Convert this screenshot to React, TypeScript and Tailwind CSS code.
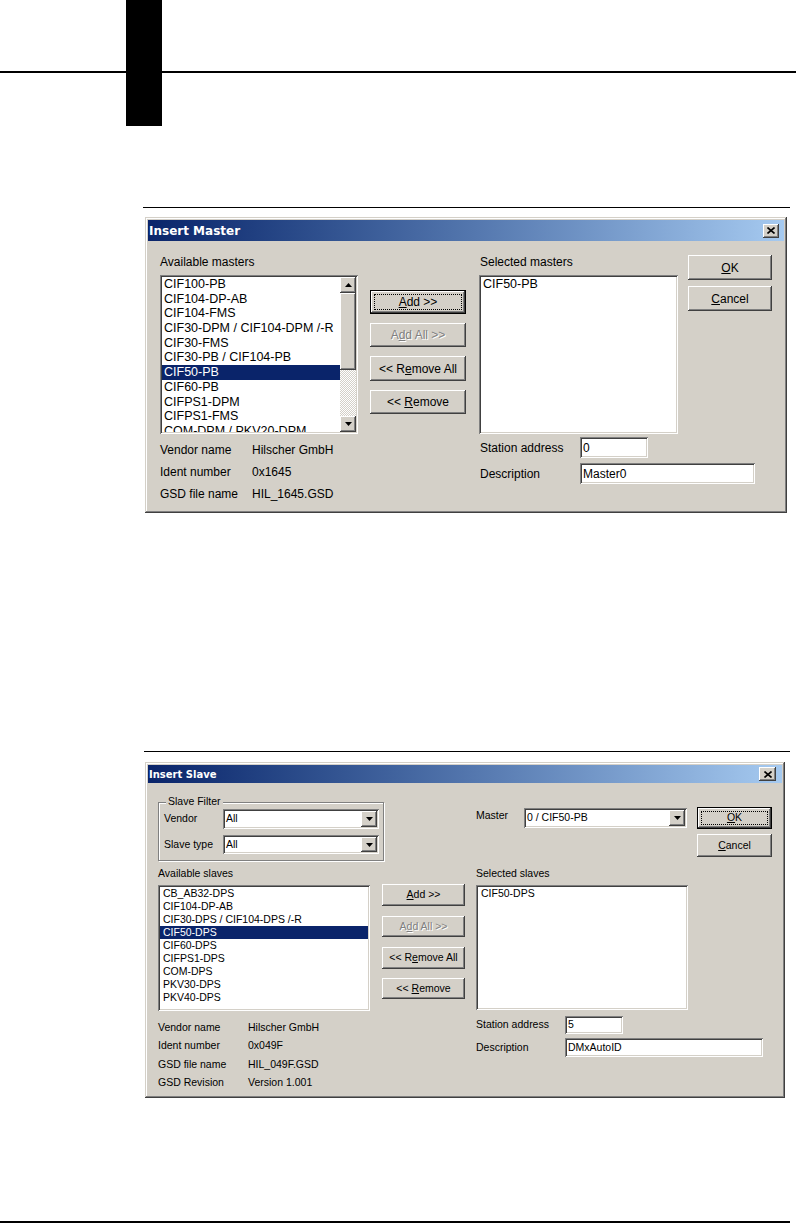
import React from 'react';

const sunken =
  'shadow-[inset_1px_1px_0_#808080,inset_-1px_-1px_0_#ffffff,inset_2px_2px_0_#404040,inset_-2px_-2px_0_#d4d0c8]';
const raised =
  'shadow-[inset_-1px_-1px_0_#404040,inset_1px_1px_0_#ffffff,inset_-2px_-2px_0_#808080,inset_2px_2px_0_#d4d0c8]';
const frame =
  'shadow-[inset_-1px_-1px_0_#404040,inset_1px_1px_0_#d4d0c8,inset_-2px_-2px_0_#808080,inset_2px_2px_0_#ffffff]';

type BtnProps = {
  children: React.ReactNode;
  className: string;
  isDefault?: boolean;
  focus?: boolean;
  disabled?: boolean;
};

const Button = ({ children, className, isDefault, focus, disabled }: BtnProps) => (
  <div className={`${className} bg-[#d4d0c8] ${isDefault ? 'border border-black' : ''}`}>
    <div
      className={`relative flex h-full w-full items-center justify-center ${raised} ${
        disabled ? 'text-[#808080] [text-shadow:1px_1px_0_#ffffff]' : 'text-black'
      }`}
    >
      {focus && <div className="absolute inset-[3px] border border-dotted border-black" />}
      <span className="whitespace-nowrap">{children}</span>
    </div>
  </div>
);

const ArrowBtn = ({ up, className }: { up?: boolean; className: string }) => (
  <div className={`${className} flex shrink-0 items-center justify-center bg-[#d4d0c8] ${raised}`}>
    <svg width="7" height="4" viewBox="0 0 7 4">
      <path d={up ? 'M3.5 0L7 4H0Z' : 'M0 0H7L3.5 4Z'} fill="#000" />
    </svg>
  </div>
);

const CloseBtn = ({ className }: { className: string }) => (
  <div className={`${className} flex items-center justify-center bg-[#d4d0c8] ${raised}`}>
    <svg width="8" height="7" viewBox="0 0 8 7">
      <path d="M0.5 0.5L7.5 6.5M7.5 0.5L0.5 6.5" stroke="#000" strokeWidth="1.6" />
    </svg>
  </div>
);

const Combo = ({ value, className }: { value: string; className: string }) => (
  <div className={`${className} flex items-stretch bg-white p-[2px] ${sunken}`}>
    <div className="flex flex-1 items-center pl-[1px] whitespace-nowrap">{value}</div>
    <ArrowBtn className="w-[16px]" />
  </div>
);

const masters = [
  'CIF100-PB',
  'CIF104-DP-AB',
  'CIF104-FMS',
  'CIF30-DPM / CIF104-DPM /-R',
  'CIF30-FMS',
  'CIF30-PB / CIF104-PB',
  'CIF50-PB',
  'CIF60-PB',
  'CIFPS1-DPM',
  'CIFPS1-FMS',
  'COM-DPM / PKV20-DPM',
];

const slaves = [
  'CB_AB32-DPS',
  'CIF104-DP-AB',
  'CIF30-DPS / CIF104-DPS /-R',
  'CIF50-DPS',
  'CIF60-DPS',
  'CIFPS1-DPS',
  'COM-DPS',
  'PKV30-DPS',
  'PKV40-DPS',
];

const InsertMaster = () => (
  <div className={`ml-[145px] mt-[9px] h-[296px] w-[642px] bg-[#d4d0c8] p-[3px] text-[12px] text-black ${frame}`}>
    <div className="flex h-[21px] items-center justify-between bg-linear-to-r from-[#0a246a] to-[#a6caf0] pl-[1px] pr-[5px]">
      <span className="font-['DejaVu_Sans',sans-serif] text-[12px] font-bold text-white">Insert Master</span>
      <CloseBtn className="h-[14px] w-[16px]" />
    </div>

    <div className="flex items-start pt-[13px]">
      {/* available */}
      <div className="ml-[12px] w-[198px] shrink-0">
        <div className="h-[21px] leading-[16px]">Available masters</div>
        <div className={`flex h-[159px] bg-white p-[2px] ${sunken}`}>
          <div className="min-w-0 flex-1 overflow-hidden text-[12.5px]">
            {masters.map((m) => (
              <div
                key={m}
                className={`h-[14.7px] whitespace-nowrap pl-[2px] leading-[15px] ${
                  m === 'CIF50-PB' ? 'bg-[#0a246a] text-white' : ''
                }`}
              >
                {m}
              </div>
            ))}
          </div>
          <div className="flex w-[16px] flex-col">
            <ArrowBtn up className="h-[16px] w-[16px]" />
            <div className={`h-[77px] bg-[#d4d0c8] ${raised}`} />
            <div className="flex-1 bg-[image:repeating-conic-gradient(#d4d0c8_0_25%,#ffffff_0_50%)] bg-[length:2px_2px]" />
            <ArrowBtn className="h-[16px] w-[16px]" />
          </div>
        </div>
        <div className="mt-[5px] leading-[22px]">
          <div className="flex">
            <span className="w-[92px]">Vendor name</span>
            <span>Hilscher GmbH</span>
          </div>
          <div className="flex">
            <span className="w-[92px]">Ident number</span>
            <span>0x1645</span>
          </div>
          <div className="flex">
            <span className="w-[92px]">GSD file name</span>
            <span>HIL_1645.GSD</span>
          </div>
        </div>
      </div>

      {/* buttons */}
      <div className="ml-[12px] mt-[36px] w-[96px] shrink-0">
        <Button className="h-[24px]" isDefault focus>
          <u>A</u>dd &gt;&gt;
        </Button>
        <Button className="mt-[9px] h-[24px]" disabled>
          A<u>d</u>d All &gt;&gt;
        </Button>
        <Button className="mt-[9px] h-[25px]">
          &lt;&lt; R<u>e</u>move All
        </Button>
        <Button className="mt-[9px] h-[24px]">
          &lt;&lt; <u>R</u>emove
        </Button>
      </div>

      {/* selected */}
      <div className="ml-[13px] w-[199px] shrink-0">
        <div className="h-[21px] pl-[1px] leading-[16px]">Selected masters</div>
        <div className={`h-[159px] bg-white p-[2px] text-[12.5px] ${sunken}`}>
          <div className="h-[14.7px] pl-[2px] leading-[15px]">CIF50-PB</div>
        </div>
        <div className="mt-[3px] flex h-[21px] w-max items-center">
          <span className="w-[101px] pl-[1px]">Station address</span>
          <div className={`flex h-[21px] w-[68px] items-center bg-white pl-[3px] ${sunken}`}>0</div>
        </div>
        <div className="mt-[5px] flex h-[21px] w-max items-center">
          <span className="w-[101px] pl-[1px]">Description</span>
          <div className={`flex h-[21px] w-[175px] items-center bg-white pl-[3px] ${sunken}`}>Master0</div>
        </div>
      </div>

      {/* ok / cancel */}
      <div className="ml-[10px] mt-[1px] w-[84px] shrink-0">
        <Button className="h-[25px]">
          <u>O</u>K
        </Button>
        <Button className="mt-[6px] h-[25px]">
          <u>C</u>ancel
        </Button>
      </div>
    </div>
  </div>
);

const InsertSlave = () => (
  <div className={`ml-[145px] mt-[10px] h-[336px] w-[640px] bg-[#d4d0c8] p-[3px] text-[10.5px] text-black ${frame}`}>
    <div className="flex h-[18px] items-center justify-between bg-linear-to-r from-[#0a246a] to-[#a6caf0] pl-[1px] pr-[6px]">
      <span className="font-['DejaVu_Sans',sans-serif] text-[10px] font-bold text-white">Insert Slave</span>
      <CloseBtn className="h-[14px] w-[17px]" />
    </div>

    {/* filter row */}
    <div className="flex items-start">
      <div className="relative ml-[10px] mt-[19px] w-[226px] shrink-0 border border-[#808080] pb-[6px] pl-[5px] pt-[6px] shadow-[inset_1px_1px_0_#ffffff,1px_1px_0_#ffffff]">
        <span className="absolute -top-[8px] left-[7px] bg-[#d4d0c8] px-[2px] leading-[13px]">Slave Filter</span>
        <div className="flex h-[20px] items-center">
          <span className="w-[59px]">Vendor</span>
          <Combo className="h-[20px] w-[156px]" value="All" />
        </div>
        <div className="mt-[6px] flex h-[19px] items-center">
          <span className="w-[59px]">Slave type</span>
          <Combo className="h-[19px] w-[156px]" value="All" />
        </div>
      </div>

      <div className="ml-[92px] mt-[25px] flex shrink-0 items-center">
        <span className="-mt-[4px] w-[48px]">Master</span>
        <Combo className="h-[20px] w-[163px]" value="0 / CIF50-PB" />
      </div>

      <div className="ml-[10px] mt-[24px] w-[75px] shrink-0">
        <Button className="h-[22px]" isDefault focus>
          <u>O</u>K
        </Button>
        <Button className="mt-[5px] h-[23px]">
          <u>C</u>ancel
        </Button>
      </div>
    </div>

    {/* lists row */}
    <div className="flex items-start">
      <div className="ml-[10px] w-[212px] shrink-0">
        <div className="h-[24px] pt-[6px] leading-[13px]">Available slaves</div>
        <div className={`h-[126px] bg-white p-[2px] ${sunken}`}>
          {slaves.map((s) => (
            <div
              key={s}
              className={`h-[13px] whitespace-nowrap pl-[3px] leading-[13px] ${
                s === 'CIF50-DPS' ? 'bg-[#0a246a] text-white' : ''
              }`}
            >
              {s}
            </div>
          ))}
        </div>
        <div className="mt-[7px] leading-[18.33px]">
          <div className="flex">
            <span className="w-[90px]">Vendor name</span>
            <span>Hilscher GmbH</span>
          </div>
          <div className="flex">
            <span className="w-[90px]">Ident number</span>
            <span>0x049F</span>
          </div>
          <div className="flex">
            <span className="w-[90px]">GSD file name</span>
            <span>HIL_049F.GSD</span>
          </div>
          <div className="flex">
            <span className="w-[90px]">GSD Revision</span>
            <span>Version 1.001</span>
          </div>
        </div>
      </div>

      <div className="ml-[12px] mt-[23px] w-[83px] shrink-0">
        <Button className="h-[22px]">
          <u>A</u>dd &gt;&gt;
        </Button>
        <Button className="mt-[10px] h-[21px]" disabled>
          A<u>d</u>d All &gt;&gt;
        </Button>
        <Button className="mt-[10px] h-[22px]">
          &lt;&lt; R<u>e</u>move All
        </Button>
        <Button className="mt-[9px] h-[21px]">
          &lt;&lt; <u>R</u>emove
        </Button>
      </div>

      <div className="ml-[11px] w-[212px] shrink-0">
        <div className="h-[24px] pt-[6px] leading-[13px]">Selected slaves</div>
        <div className={`h-[125px] bg-white p-[2px] ${sunken}`}>
          <div className="h-[13px] pl-[3px] leading-[13px]">CIF50-DPS</div>
        </div>
        <div className="mt-[6px] flex h-[18px] w-max items-center">
          <span className="w-[89px]">Station address</span>
          <div className={`flex h-[18px] w-[58px] items-center bg-white pl-[3px] ${sunken}`}>5</div>
        </div>
        <div className="mt-[4px] flex h-[19px] w-max items-center">
          <span className="w-[89px]">Description</span>
          <div className={`flex h-[19px] w-[198px] items-center bg-white pl-[3px] ${sunken}`}>DMxAutoID</div>
        </div>
      </div>
    </div>
  </div>
);

export default function App() {
  return (
    <div className="relative h-[1225px] w-[796px] overflow-hidden bg-white font-['Liberation_Sans',Arial,sans-serif]">
      {/* page header with chapter tab */}
      <div className="relative h-[126px] pt-[71px]">
        <div className="h-[2px] bg-black" />
        <div className="absolute left-[126px] top-0 h-[126px] w-[36px] bg-black" />
      </div>

      <div className="ml-[143px] mt-[81px] h-[1px] w-[647px] bg-black" />
      <InsertMaster />

      <div className="ml-[144px] mt-[238px] h-[1px] w-[646px] bg-black" />
      <InsertSlave />

      <div className="mt-[123px] h-[2px] w-[790px] bg-black" />
    </div>
  );
}
